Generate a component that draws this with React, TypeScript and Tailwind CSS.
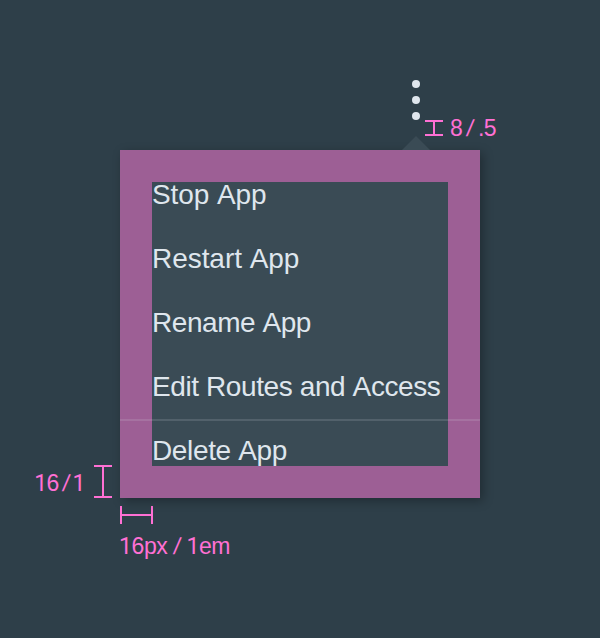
import React from "react";

const items = [
  { label: "Stop App", tracking: "tracking-[-0.1px]" },
  { label: "Restart App", tracking: "tracking-[-0.05px]" },
  { label: "Rename App", tracking: "tracking-[-0.45px]" },
  { label: "Edit Routes and Access", tracking: "tracking-[-0.4px]" },
  { label: "Delete App", tracking: "tracking-[-0.35px]" },
];

function Dots() {
  return (
    <div className="flex flex-col gap-2 pt-20">
      <span className="size-2 rounded-full bg-[#dfe6ed]" />
      <span className="size-2 rounded-full bg-[#dfe6ed]" />
      <span className="size-2 rounded-full bg-[#dfe6ed]" />
    </div>
  );
}

function VerticalMeasure({ className }: { className: string }) {
  return (
    <div className={`flex w-[18px] flex-col items-center ${className}`}>
      <span className="h-0.5 w-full shrink-0 bg-[#ff70d4]" />
      <span className="w-0.5 flex-1 bg-[#ff70d4]" />
      <span className="h-0.5 w-full shrink-0 bg-[#ff70d4]" />
    </div>
  );
}

function HorizontalMeasure() {
  return (
    <div className="flex h-[18px] w-[33px] items-center">
      <span className="h-full w-0.5 bg-[#ff70d4]" />
      <span className="h-0.5 flex-1 bg-[#ff70d4]" />
      <span className="h-full w-0.5 bg-[#ff70d4]" />
    </div>
  );
}

function One() {
  return <span className="font-['Roboto'] font-normal">1</span>;
}

function Slash() {
  return <span className="inline-block -skew-x-[9deg]">/</span>;
}

export default function App() {
  return (
    <main className="grid h-[638px] w-[600px] grid-cols-[120px_360px_120px] grid-rows-[150px_348px_140px] overflow-hidden bg-[#2e3f49] font-['Liberation_Sans',Arial,sans-serif] text-[#ff70d4]">
      <header className="col-span-3 flex pl-[412px]">
        <Dots />
        <VerticalMeasure className="mt-[120px] ml-[5px] h-4" />
        <span className="mt-[116px] ml-[7px] h-6 text-[23px] leading-6 tracking-[-0.5px] [word-spacing:-1px] whitespace-pre">
          8 <Slash /> .5
        </span>
      </header>

      <div className="flex justify-end pt-[315px] pr-2">
        <span className="mt-[6px] mr-[9px] h-6 text-[23px] leading-6 tracking-[-0.5px] [word-spacing:-2px] whitespace-pre">
          <One />6 <Slash /> <One />
        </span>
        <VerticalMeasure className="h-[33px]" />
      </div>

      <section className="relative border-[32px] border-[#9d5f95] bg-[#3a4b55] shadow-[3px_3px_10px_rgba(0,0,0,0.3)]">
        <svg className="absolute -top-[46px] left-[250px]" width="28" height="14" viewBox="0 0 28 14">
          <path d="M0 14L14 0L28 14Z" fill="#3a4b55" />
        </svg>
        <ul className="-mt-[3px] flex flex-col gap-8 text-[28px] leading-8 whitespace-nowrap text-[#dfe6ed] [font-kerning:none]">
          {items.map((item) => (
            <li key={item.label} className={`h-8 ${item.tracking}`}>
              {item.label}
            </li>
          ))}
        </ul>
        <hr className="absolute top-[237px] -right-8 -left-8 h-0.5 border-0 bg-[#dfe6ed]/15" />
      </section>
      <div />

      <footer className="col-start-2 pt-2">
        <HorizontalMeasure />
        <p className="mt-[10px] -ml-px h-6 text-[23px] leading-6 tracking-[-0.4px] [word-spacing:0.5px]">
          <One />6px <Slash /> <One />em
        </p>
      </footer>
    </main>
  );
}
